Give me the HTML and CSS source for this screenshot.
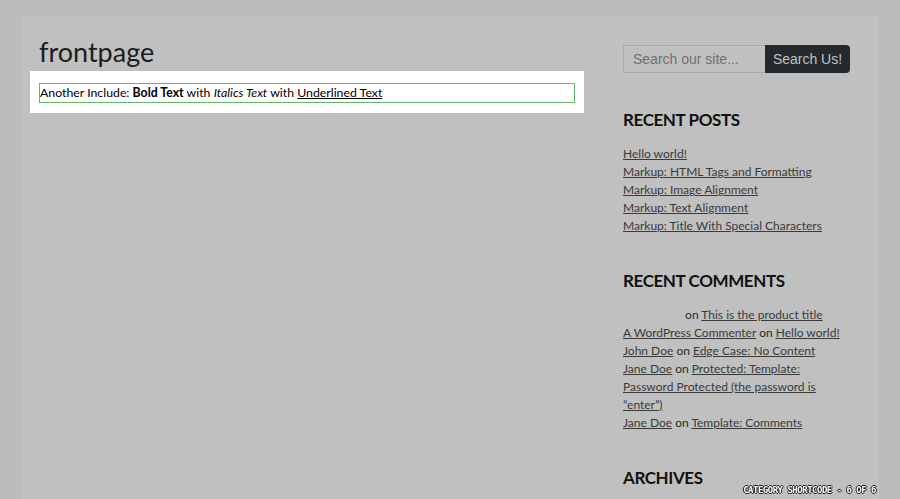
FILE: index.html
```html
<!DOCTYPE html>
<html>
<head>
<meta charset="utf-8">
<link rel="stylesheet" href="styles.css">
</head>
<body>
<div class="page">
  <main class="main">
    <h1 class="title">frontpage</h1>
    <div class="include-wrap">
      <div class="include">Another Include: <b>Bold Text</b> with <i>Italics Text</i> with <u>Underlined Text</u></div>
    </div>
  </main>
  <aside class="sidebar">
    <form class="search">
      <input class="search-input" type="text" placeholder="Search our site...">
      <button class="search-btn" type="button">Search Us!</button>
    </form>
    <section class="widget">
      <h2 class="widget-title">Recent Posts</h2>
      <ul class="list">
        <li><a href="#">Hello world!</a></li>
        <li><a href="#">Markup: HTML Tags and Formatting</a></li>
        <li><a href="#">Markup: Image Alignment</a></li>
        <li><a href="#">Markup: Text Alignment</a></li>
        <li><a href="#">Markup: Title With Special Characters</a></li>
      </ul>
    </section>
    <section class="widget">
      <h2 class="widget-title">Recent Comments</h2>
      <ul class="list">
        <li><span class="blank-author"></span> on <a href="#">This is the product title</a></li>
        <li><a href="#">A WordPress Commenter</a> on <a href="#">Hello world!</a></li>
        <li><a href="#">John Doe</a> on <a href="#">Edge Case: No Content</a></li>
        <li><a href="#">Jane Doe</a> on <a href="#">Protected: Template: Password Protected (the password is “enter”)</a></li>
        <li><a href="#">Jane Doe</a> on <a href="#">Template: Comments</a></li>
      </ul>
    </section>
    <section class="widget">
      <h2 class="widget-title">Archives</h2>
    </section>
  </aside>
</div>
<div class="overlay-label">Category Shortcode - 6 of 6</div>
</body>
</html>
```
FILE: styles.css
```css
html, body {
  margin: 0;
  padding: 0;
  height: 100%;
  overflow: hidden;
}
body {
  background: #bbbbb9;
  font-family: "Lato", "Open Sans", sans-serif;
  color: #222;
}
.page {
  margin: 15px 21px 0 21px;
  background: #c0c0c0;
  height: 484px;
  display: flex;
  padding: 0 29px 0 9px;
  gap: 39px;
}
.main {
  width: 554px;
  flex: none;
}
.title {
  margin: 0;
  padding: 19px 0 0 9px;
  font-size: 27px;
  font-weight: 400;
  line-height: 35px;
  color: #1c1c1c;
  height: 37px;
}
.include-wrap {
  background: #fff;
  padding: 12px 9px 10px 9px;
}
.include {
  border: 1px solid #62b862;
  font-size: 12.3px;
  line-height: 18px;
  color: #000;
  padding: 0;
  white-space: nowrap;
}
.include u {
  text-decoration-thickness: 1px;
}
.sidebar {
  width: 227px;
  flex: none;
  padding-top: 30px;
}
.search {
  display: flex;
  margin: 0;
  height: 28px;
}
.search-input {
  width: 142px;
  box-sizing: border-box;
  height: 28px;
  border: 1px solid #a9a9a9;
  border-right: none;
  background: #c0c0c0;
  font-family: "Liberation Sans", Arial, sans-serif;
  font-size: 14px;
  padding: 0 9px;
  color: #666;
  outline: none;
}
.search-input::placeholder {
  color: #707070;
}
.search-btn {
  width: 85px;
  height: 28px;
  border: none;
  background: #25282c;
  color: #c2c2c2;
  font-family: "Liberation Sans", Arial, sans-serif;
  font-size: 14px;
  border-radius: 0 4px 4px 0;
  padding: 0;
}
.widget {
  margin-top: 34px;
}
.sidebar .widget:first-of-type {
  margin-top: 35px;
}
.widget-title {
  margin: 0 0 13px 0;
  font-size: 17px;
  letter-spacing: -0.4px;
  font-weight: 700;
  text-transform: uppercase;
  line-height: 24px;
  color: #111;
}
.list {
  list-style: none;
  margin: 0;
  padding: 0;
  font-size: 12px;
  line-height: 18px;
  color: #2a2a2a;
}
.list a {
  color: #3a3a3a;
  text-decoration: underline;
}
.blank-author {
  display: inline-block;
  width: 59px;
}
.overlay-label {
  position: fixed;
  right: 24px;
  bottom: 4px;
  font-family: "DejaVu Sans Mono", monospace;
  font-size: 9px;
  line-height: 10px;
  font-weight: 700;
  text-transform: uppercase;
  color: #fff;
  letter-spacing: -0.5px;
  text-shadow: 1px 0 0 #222, -1px 0 0 #222, 0 1px 0 #222, 0 -1px 0 #222;
}
```
